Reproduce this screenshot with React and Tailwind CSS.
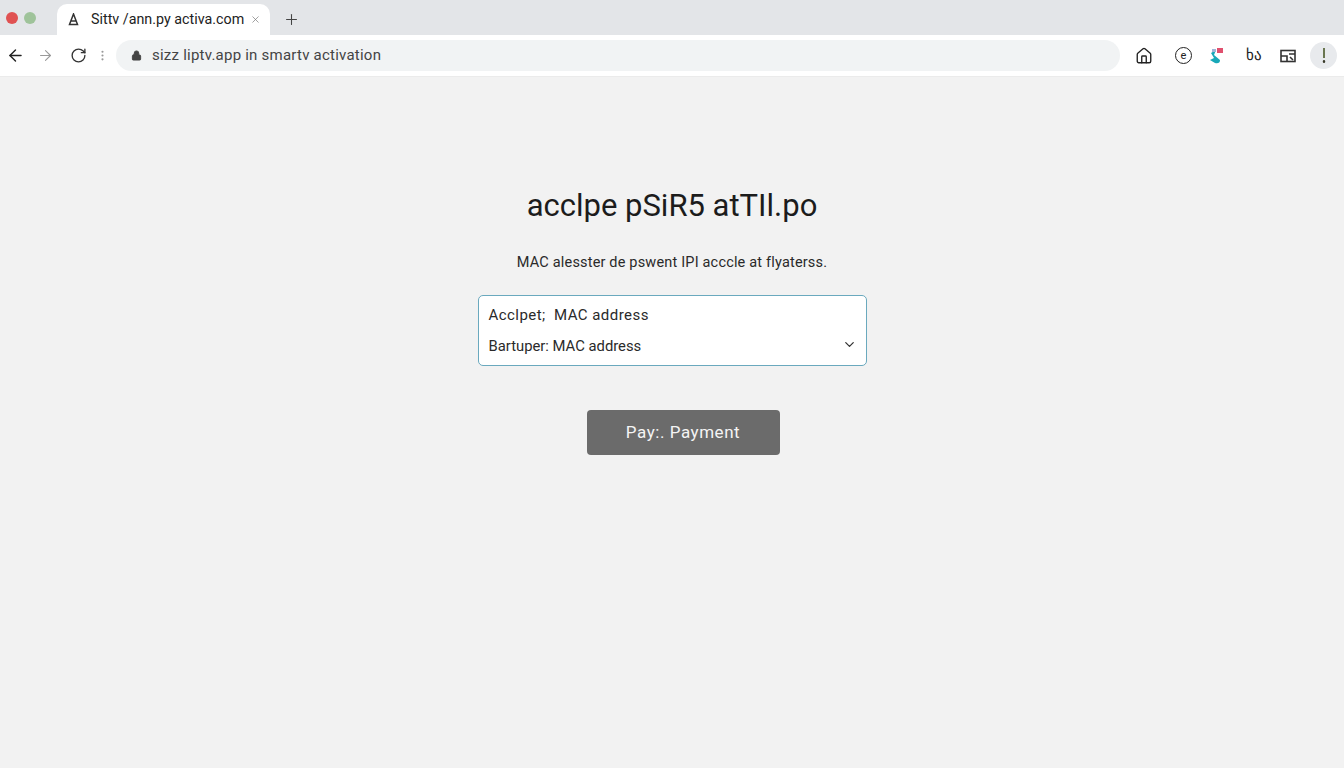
import React from 'react';
import { ArrowLeft, ArrowRight, RotateCw, EllipsisVertical, Lock, Plus, X, House, ChevronDown } from 'lucide-react';

function Toolbar() {
  return (
    <div className="h-[41px] bg-white flex items-center text-[#333] border-b border-[#ebebeb] box-content">
      <div className="flex items-center pl-[6px] shrink-0">
        <ArrowLeft size={19} strokeWidth={1.8} className="text-[#222]" />
        <ArrowRight size={17} strokeWidth={1.5} className="ml-[12px] text-[#9a9a9a]" />
        <RotateCw size={17} strokeWidth={1.9} className="ml-[16px] text-[#333]" />
        <EllipsisVertical size={13} strokeWidth={2} className="ml-[9px] text-[#999]" />
      </div>
      <div className="ml-[7px] w-[1004px] h-[31px] rounded-full bg-[#f1f3f4] flex items-center pl-[15px] shrink-0">
        <Lock size={11} fill="#444" strokeWidth={2} className="text-[#444]" />
        <span className="ml-[10px] text-[15px] text-[#444] tracking-[0.23px] whitespace-nowrap">sizz liptv.app in smartv activation</span>
      </div>
      <div className="flex items-center ml-[15px] shrink-0">
        <House size={18} strokeWidth={1.8} className="text-[#222]" />
        <div className="ml-[22px] w-[17px] h-[17px] rounded-full border-[1.5px] border-[#222] flex items-center justify-center text-[11px] leading-none text-[#222]">e</div>
        <svg width="18" height="18" viewBox="0 0 18 18" className="ml-[15px]">
          <path d="M4 6 L9 3 L7 8 L13 13 Q13 17 8 16 L3 13 L7 11 Z" fill="#18a8b8" />
          <rect x="10" y="1" width="6" height="5" fill="#e0506e" />
          <rect x="5" y="2" width="4" height="3" fill="#9fb4d8" />
        </svg>
        <span className="ml-[21px] w-[18px] text-[15px] leading-none text-[#222]">ხა</span>
        <svg width="16" height="14" viewBox="0 0 16 14" fill="none" stroke="#333" strokeWidth="1.6" className="ml-[16px]">
          <rect x="1" y="1.5" width="14" height="11" />
          <path d="M1 7 H7 V12.5 M9 5 L15 5 M10 8 L13 11" />
        </svg>
        <div className="ml-[14px] w-[27px] h-[27px] rounded-full bg-[#e8eaed] flex items-center justify-center">
          <svg width="4" height="16" viewBox="0 0 4 16">
            <rect x="1.2" y="0" width="1.6" height="10" fill="#4a5a2a" />
            <rect x="0.8" y="12" width="2.4" height="3" rx="1.2" fill="#3a3a2a" />
          </svg>
        </div>
      </div>
    </div>
  );
}

export default function App() {
  return (
    <div className="min-h-[768px] bg-[#f2f2f2] flex flex-col font-['Roboto',sans-serif] overflow-hidden">
      {/* tab strip */}
      <div className="h-[35px] bg-[#e3e5e8] flex items-end">
        <div className="flex items-center h-[35px] pl-[6px] gap-[6px]">
          <span className="w-[12px] h-[12px] rounded-full bg-[#e05252]" />
          <span className="w-[12px] h-[12px] rounded-full bg-[#9fc39a]" />
        </div>
        <div className="ml-[21px] w-[213px] h-[31px] bg-white rounded-t-[10px] flex items-center pl-[11px]">
          <svg width="11" height="13" viewBox="0 0 11 13" fill="none" stroke="#333" strokeWidth="1.5">
            <path d="M5.5 1 L1.5 11.5 H9.5 Z M3 8 H8" />
          </svg>
          <span className="ml-[12px] text-[14.3px] text-[#222] whitespace-nowrap">Sittv /ann.py activa.com</span>
          <X size={11} strokeWidth={1.5} className="ml-[6px] text-[#777]" />
        </div>
        <Plus size={17} strokeWidth={1.5} className="ml-[13px] mb-[7px] text-[#444]" />
      </div>
      <Toolbar />

      <main className="flex flex-col items-center pt-[109px]">
        <h1 className="text-[31px] leading-[40px] font-normal text-[#1c1c1c]">acclpe pSiR5 atTIl.po</h1>
        <p className="mt-[27px] text-[14.5px] leading-[20px] text-[#2a2a2a] tracking-[0.18px]">MAC alesster de pswent IPI acccle at flyaterss.</p>

        <div className="mt-[22px] w-[389px] h-[71px] rounded-[5px] border-[1.5px] border-[#6aa9be] bg-white pl-[10px] pr-[9px] pt-[9px] text-[15px] leading-[20px] text-[#2a2a2a]">
          <div className="tracking-[0.45px]">Acclpet;&nbsp; MAC address</div>
          <div className="mt-[11px] flex items-center justify-between text-[14.8px]">
            <span>Bartuper: MAC address</span>
            <ChevronDown size={15} strokeWidth={2} className="-mt-[3px] text-[#333]" />
          </div>
        </div>

        <button className="mt-[44px] ml-[22px] w-[193px] h-[45px] rounded-[4px] bg-[#6b6b6b] pt-[1px] text-[#f4f4f4] text-[17px] tracking-[0.55px]">
          Pay:. Payment
        </button>
      </main>
    </div>
  );
}
